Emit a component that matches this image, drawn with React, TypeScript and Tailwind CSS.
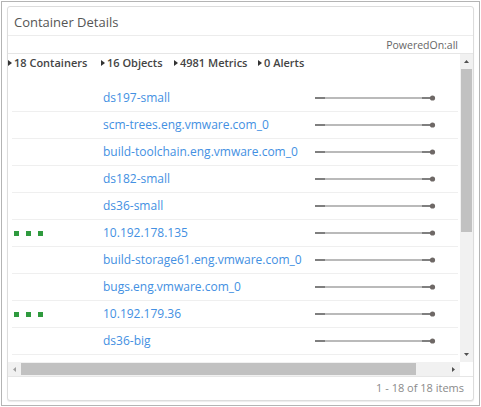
import React from 'react';

const ROWS = [
  { name: 'ds197-small', dots: false },
  { name: 'scm-trees.eng.vmware.com_0', dots: false },
  { name: 'build-toolchain.eng.vmware.com_0', dots: false },
  { name: 'ds182-small', dots: false },
  { name: 'ds36-small', dots: false },
  { name: '10.192.178.135', dots: true },
  { name: 'build-storage61.eng.vmware.com_0', dots: false },
  { name: 'bugs.eng.vmware.com_0', dots: false },
  { name: '10.192.179.36', dots: true },
  { name: 'ds36-big', dots: false },
];

const SUMMARY = ['18 Containers', '16 Objects', '4981 Metrics', '0 Alerts'];

function Caret() {
  return (
    <svg width="4" height="6" viewBox="0 0 4 6" className="mr-[2px]">
      <path d="M0 0 L4 3 L0 6 Z" fill="#333" />
    </svg>
  );
}

function Spark() {
  return (
    <svg width="122" height="8" viewBox="0 0 122 8">
      <line x1="0" y1="4" x2="118" y2="4" stroke="#a3a3a3" strokeWidth="1.5" />
      <line x1="0" y1="4" x2="10" y2="4" stroke="#6b6b6b" strokeWidth="1.5" />
      <line x1="107" y1="4" x2="118" y2="4" stroke="#6b6b6b" strokeWidth="1.5" />
      <circle cx="117.5" cy="4" r="2.6" fill="#6e6866" />
    </svg>
  );
}

function Dots() {
  return (
    <div className="flex gap-[7px]">
      <span className="block h-[5px] w-[5px] bg-[#2e9a3e]" />
      <span className="block h-[5px] w-[5px] bg-[#2e9a3e]" />
      <span className="block h-[5px] w-[5px] bg-[#2e9a3e]" />
    </div>
  );
}

export default function App() {
  return (
    <div
      className="h-[407px] w-[481px] overflow-hidden bg-white p-px"
      style={{ fontFamily: '"Open Sans", "Liberation Sans", sans-serif' }}
    >
      <div className="h-[405px] border border-[#b4b4b4] px-[5px] pt-[4px]">
        <div className="flex h-[395px] flex-col rounded-[3px] border border-[#dcdcdc] bg-white shadow-[0_1px_1px_rgba(0,0,0,0.08)]">
          {/* title */}
          <div className="flex h-[29px] shrink-0 items-center border-b border-[#ececec] pl-[6px] pt-[3px] text-[13px] text-[#555]">
            Container Details
          </div>
          {/* filter */}
          <div className="flex h-[18px] shrink-0 items-center justify-end border-b border-[#e6e6e6] pr-[15px] pt-[2px] text-[10.5px] text-[#666]">
            PoweredOn:all
          </div>
          {/* grid */}
          <div className="flex h-[322px] shrink-0 flex-col">
            <div className="flex h-[308px]">
              <div className="min-w-0 flex-1 overflow-hidden">
                <div className="flex h-[17px] items-center pt-[1px] text-[11px] font-semibold text-[#444]">
                  {SUMMARY.map((s, i) => (
                    <div
                      key={s}
                      className={
                        i === 0 ? 'flex w-[93px] items-center' : i === 1 ? 'flex w-[73px] items-center' : i === 2 ? 'flex w-[84px] items-center' : 'flex items-center'
                      }
                    >
                      <Caret />
                      {s}
                    </div>
                  ))}
                </div>
                <div className="pt-[14px]">
                  {ROWS.map((r) => (
                    <div
                      key={r.name}
                      className="ml-[4px] mr-[2px] flex h-[27px] items-center border-b border-[#efefef]"
                    >
                      <div className="w-[91px] pl-[2px]">{r.dots && <Dots />}</div>
                      <div className="w-[212px] whitespace-nowrap text-[12px] text-[#4390e2]">
                        {r.name}
                      </div>
                      <Spark />
                    </div>
                  ))}
                </div>
              </div>
              {/* vertical scrollbar */}
              <div className="flex w-[13px] shrink-0 flex-col bg-[#f1f1f1]">
                <div className="flex h-[15px] items-center justify-center">
                  <svg width="5" height="3" viewBox="0 0 5 3">
                    <path d="M0 3 L2.5 0 L5 3 Z" fill="#505050" />
                  </svg>
                </div>
                <div className="mx-[1px] h-[163px] bg-[#c1c1c1]" />
                <div className="flex-1" />
                <div className="flex h-[15px] items-center justify-center">
                  <svg width="5" height="3" viewBox="0 0 5 3">
                    <path d="M0 0 L2.5 3 L5 0 Z" fill="#505050" />
                  </svg>
                </div>
              </div>
            </div>
            {/* horizontal scrollbar */}
            <div className="flex h-[14px]">
              <div className="flex flex-1 items-center bg-[#f1f1f1]">
                <div className="flex w-[13px] justify-center">
                  <svg width="3" height="5" viewBox="0 0 3 5">
                    <path d="M3 0 L0 2.5 L3 5 Z" fill="#a0a0a0" />
                  </svg>
                </div>
                <div className="h-[12px] w-[395px] bg-[#c1c1c1]" />
                <div className="flex flex-1 justify-end pr-[5px]">
                  <svg width="3" height="5" viewBox="0 0 3 5">
                    <path d="M0 0 L3 2.5 L0 5 Z" fill="#505050" />
                  </svg>
                </div>
              </div>
              <div className="w-[13px] bg-white" />
            </div>
          </div>
          {/* footer */}
          <div className="flex flex-1 items-center justify-end border-t border-[#e6e6e6] pr-[9px] text-[11px] text-[#8a8a8a]">
            1 - 18 of 18 items
          </div>
        </div>
      </div>
    </div>
  );
}
